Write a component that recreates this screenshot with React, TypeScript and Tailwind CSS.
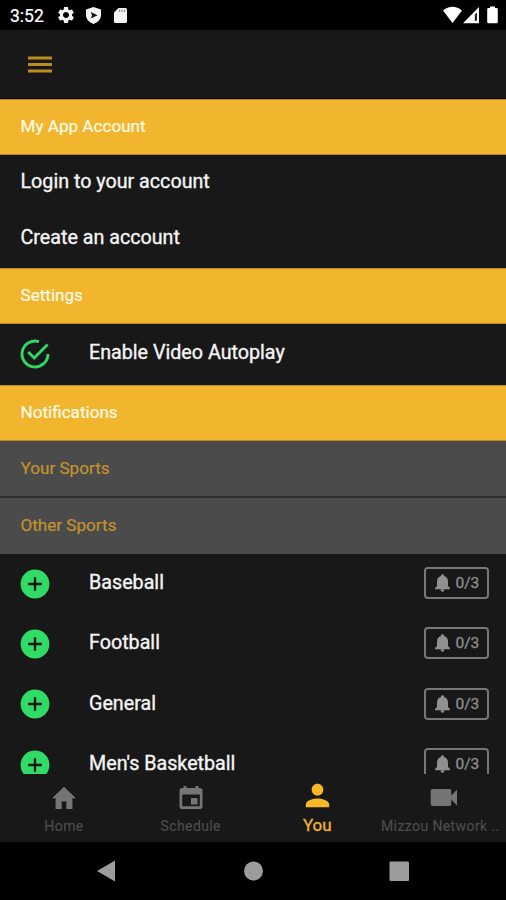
import React from "react";

const sports = ["Baseball", "Football", "General", "Men's Basketball"];

function StatusBar() {
  return (
    <div className="flex h-[30px] shrink-0 items-start bg-black text-white">
      <span className="ml-[10px] mt-[5px] w-[46px] text-[17.5px] leading-[22px] [-webkit-text-stroke:0.2px]">3:52</span>
      <svg className="mt-[5px] size-[20px]" viewBox="0 0 24 24" fill="#f4f4f4">
        <path d="M19.14 12.94c.04-.3.06-.61.06-.94 0-.32-.02-.64-.07-.94l2.03-1.58c.18-.14.23-.41.12-.61l-1.92-3.32c-.12-.22-.37-.29-.59-.22l-2.39.96c-.5-.38-1.03-.7-1.62-.94l-.36-2.54c-.04-.24-.24-.41-.48-.41h-3.84c-.24 0-.43.17-.47.41l-.36 2.54c-.59.24-1.13.57-1.62.94l-2.39-.96c-.22-.08-.47 0-.59.22L2.74 8.87c-.12.21-.08.47.12.61l2.03 1.58c-.05.3-.09.63-.09.94s.02.64.07.94l-2.03 1.58c-.18.14-.23.41-.12.61l1.92 3.32c.12.22.37.29.59.22l2.39-.96c.5.38 1.03.7 1.62.94l.36 2.54c.05.24.24.41.48.41h3.84c.24 0 .44-.17.47-.41l.36-2.54c.59-.24 1.13-.56 1.62-.94l2.39.96c.22.08.47 0 .59-.22l1.92-3.32c.12-.22.07-.47-.12-.61l-2.01-1.58zM12 15.600c-1.980 0-3.600-1.620-3.600-3.600s1.620-3.600 3.600-3.600 3.600 1.620 3.600 3.600-1.620 3.600-3.600 3.600z" />
      </svg>
      <svg className="ml-[10px] mt-[7px] h-[17px] w-[15px]" viewBox="0 0 15 17">
        <path d="M7.500 0L15 2.600V8C15 12 12 15.500 7.500 17C3 15.500 0 12 0 8V2.600Z" fill="#f4f4f4" />
        <path d="M4.800 5L11.600 8.200L4.800 11.400L6 8.200Z" fill="#111" />
      </svg>
      <svg className="ml-[13px] mt-[8px] h-[15px] w-[13px]" viewBox="0 0 13 15">
        <path d="M4.500 0H11.500Q13 0 13 1.500V13.500Q13 15 11.500 15H1.500Q0 15 0 13.500V4.500Z" fill="#f4f4f4" />
        <path d="M5.500 1.500v2.500M8 1.500v2.500M10.500 1.500v2.500" stroke="#888" strokeWidth="1.200" />
      </svg>
      <svg className="ml-auto mr-[7px] mt-[6px] h-[18px] w-[56px]" viewBox="443 6 56 18" fill="#fff">
        <path d="M443 10.500Q452.500 3 462 10.500L452.500 23Z" />
        <path d="M463 23.200 479 7v16.200Z" />
        <path d="M474.800 14.500 477 12.500v8.200h-2.200Z" fill="#222" />
        <path d="M490 6.500h5V8h1.500q1.300 0 1.300 1.300v12.600q0 1.300-1.300 1.300h-8q-1.300 0-1.300-1.300V9.300Q487.200 8 488.500 8H490Z" />
      </svg>
    </div>
  );
}

function SectionTitle({ children }: { children: React.ReactNode }) {
  return (
    <h2 className="flex h-[56px] shrink-0 items-center border-y border-[#b98a20] bg-[#f1b62d] pl-[20.5px] text-[17.1px] text-[#fffbe9] [-webkit-text-stroke:0.2px]">
      {children}
    </h2>
  );
}

function CheckIcon() {
  return (
    <svg className="size-[32px]" viewBox="0 0 32 32" fill="none" stroke="#2fd765" strokeWidth="2.9">
      <path d="M20 3.600A13 13 0 1 0 29 16" />
      <path d="m9.200 14 6 6L28.600 6.500" />
    </svg>
  );
}

function PlusIcon() {
  return (
    <svg className="size-[32px]" viewBox="0 0 32 32">
      <circle cx="16" cy="16" r="14.400" fill="#31dc66" />
      <path d="M9.200 16h13.600M16 9.200v13.600" stroke="#171717" strokeWidth="2.300" />
    </svg>
  );
}

function SportRow({ name }: { name: string }) {
  return (
    <li className="flex h-[60.3px] shrink-0 items-center pb-px pl-[19px] pr-[17px]">
      <PlusIcon />
      <span className="ml-[38px] pb-px text-[19.7px] leading-5 [-webkit-text-stroke:0.35px]">{name}</span>
      <span className="mb-px ml-auto flex h-[32px] w-[65px] items-center rounded-[4px] border-2 border-[#777] pl-[9px] text-[15.5px] leading-4 text-[#8c8c8c] [-webkit-text-stroke:0.35px]">
        <svg className="mr-[6px] h-[18px] w-[15px] -ml-[0.5px]" viewBox="0 0 15 18" fill="#909090">
          <path d="M6 2V1.500Q6 .3 7.500 .3T9 1.500V2Q13 3.200 13 7.500V12L15 14V15.200H0V14L2 12V7.500Q2 3.200 6 2ZM5.500 15.500H9.500Q9.300 17.700 7.500 17.700T5.500 15.500Z" />
        </svg>
        0/3
      </span>
    </li>
  );
}

function TabBar() {
  return (
    <nav className="grid h-[68px] shrink-0 grid-cols-4 bg-[#181818] text-center text-[14px] tracking-[0.4px] text-[#4d4d4d] [-webkit-text-stroke:0.15px]">
      <div className="flex flex-col items-center pl-[1.5px]">
        <svg className="mt-[10px] size-[28px]" viewBox="0 0 24 24" fill="#757575">
          <path d="M10 21.500v-6.500h4v6.500h5.200v-9.300h3L12 2.300 1.800 12.200h3v9.300z" />
        </svg>
        <span className="mt-[4px] leading-5">Home</span>
      </div>
      <div className="flex flex-col items-center pl-[2px]">
        <svg className="mt-[12px] size-[24px]" viewBox="0 0 24 24" fill="#757575">
          <path fillRule="evenodd" d="M4.500 0h3v2h9V0h3v2H21q2.500 0 2.500 2.500v16Q23.500 23 21 23H3Q.5 23 .5 20.500v-16Q.5 2 3 2h1.500ZM3.200 8.500v11.800h17.600V8.500Z" />
          <path d="M12 12h6.500v6.500H12z" />
        </svg>
        <span className="mt-[6px] leading-5">Schedule</span>
      </div>
      <div className="flex flex-col items-center pl-[2px] text-[#efb32d]">
        <svg className="mt-[4px] size-[35px]" viewBox="0 0 24 24" fill="#f9b927">
          <path d="M12 12c2.210 0 4-1.790 4-4s-1.790-4-4-4-4 1.790-4 4 1.790 4 4 4zm0 2c-2.670 0-8 1.340-8 4v2h16v-2c0-2.660-5.330-4-8-4z" />
        </svg>
        <span className="mt-[2px] text-[17px] leading-5 tracking-normal [-webkit-text-stroke:0.35px]">You</span>
      </div>
      <div className="flex min-w-0 flex-col items-start pl-[1.5px]">
        <svg className="ml-[49px] mt-[13px] h-[22px] w-[28px]" viewBox="0 0 28 22" fill="#757575">
          <path d="M2.500 2h17Q21.300 2 21.300 3.800V8.500L27 2.500V18.500L21.300 12.500V17.200Q21.300 19 19.500 19h-17Q.7 19 .7 17.200V3.800Q.7 2 2.500 2Z" />
        </svg>
        <span className="mt-[7px] whitespace-nowrap leading-5">Mizzou Network ..</span>
      </div>
    </nav>
  );
}

export default function App() {
  return (
    <div className="flex h-[900px] w-[506px] flex-col overflow-hidden bg-[#181818] font-['Roboto',sans-serif] text-[#f4f4f4]">
      <StatusBar />
      <header className="flex h-[69px] shrink-0 items-center border-b border-black pl-[28px] pt-[2px]">
        <svg className="h-[18px] w-[24px]" viewBox="0 0 24 18" fill="#bd8b22">
          <path d="M0 .5h24v3H0zM0 7h24v3H0zM0 13.500h24v3H0z" />
        </svg>
      </header>
      <main className="flex h-[675px] shrink-0 flex-col overflow-hidden text-[19.7px]">
        <SectionTitle>My App Account</SectionTitle>
        <div className="flex h-[113px] shrink-0 flex-col pl-[20.5px] [-webkit-text-stroke:0.35px]">
          <div className="flex h-[54px] items-center">Login to your account</div>
          <div className="flex h-[58px] items-center">Create an account</div>
        </div>
        <SectionTitle>Settings</SectionTitle>
        <div className="flex h-[61px] shrink-0 items-center pb-px pl-[19px]">
          <CheckIcon />
          <span className="ml-[38px] pb-[2px] leading-6 [-webkit-text-stroke:0.35px]">Enable Video Autoplay</span>
        </div>
        <SectionTitle>Notifications</SectionTitle>
        <h3 className="flex h-[57px] shrink-0 items-center border-b-2 border-[#303030] bg-[#4b4b4b] pl-[20.5px] pt-px text-[17.1px] text-[#c3932c] [-webkit-text-stroke:0.2px]">
          Your Sports
        </h3>
        <h3 className="flex h-[56px] shrink-0 items-center bg-[#4b4b4b] pl-[20.5px] text-[17.1px] text-[#c3932c] [-webkit-text-stroke:0.2px]">
          Other Sports
        </h3>
        <ul className="flex flex-col">
          {sports.map((name) => (
            <SportRow key={name} name={name} />
          ))}
        </ul>
      </main>
      <TabBar />
      <footer className="flex h-[58px] shrink-0 items-center justify-center bg-black">
        <svg className="h-[22px] w-[312px]" viewBox="97 860 312 22" fill="#9c9c9c">
          <path d="M97 871 115 860.500V881.500Z" />
          <circle cx="253.500" cy="871" r="9.500" />
          <rect x="389.500" y="861.500" width="19.500" height="19.500" rx="1" />
        </svg>
      </footer>
    </div>
  );
}
